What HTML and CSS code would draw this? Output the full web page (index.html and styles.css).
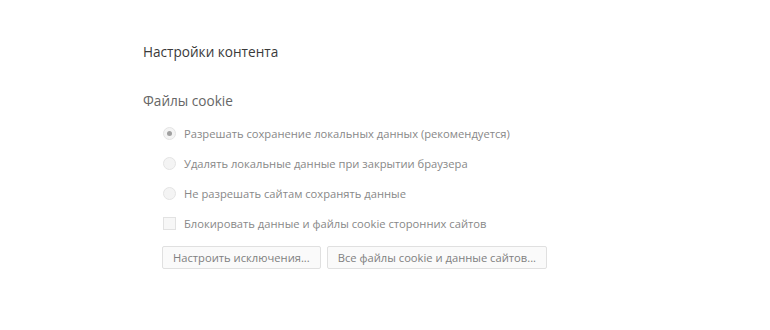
FILE: index.html
```html
<!DOCTYPE html>
<html lang="ru">
<head>
<meta charset="utf-8">
<link rel="stylesheet" href="styles.css">
</head>
<body>
<div class="page">
  <h1 class="title">Настройки контента</h1>
  <h2 class="section">Файлы cookie</h2>
  <div class="options">
    <label class="row"><span class="radio checked"></span><span class="label">Разрешать сохранение локальных данных (рекомендуется)</span></label>
    <label class="row"><span class="radio"></span><span class="label">Удалять локальные данные при закрытии браузера</span></label>
    <label class="row"><span class="radio"></span><span class="label">Не разрешать сайтам сохранять данные</span></label>
    <label class="row"><span class="check"></span><span class="label">Блокировать данные и файлы cookie сторонних сайтов</span></label>
    <div class="buttons">
      <button class="btn">Настроить исключения...</button>
      <button class="btn">Все файлы cookie и данные сайтов...</button>
    </div>
  </div>
</div>
</body>
</html>
```
FILE: styles.css
```css
html, body { margin: 0; padding: 0; background: #fff; }
body { font-family: "Open Sans", "DejaVu Sans", sans-serif; color: #333; }
.page { padding: 40px 0 0 143px; }
.title { margin: 0; font-size: 13.6px; font-weight: 400; color: #3a3a3a; line-height: 24px; }
.section { margin: 25px 0 0 0; font-size: 13.6px; font-weight: 400; color: #666; line-height: 24px; }
.options { padding: 5px 0 0 20px; display: flex; flex-direction: column; }
.row { display: flex; align-items: center; height: 30px; gap: 8px; }
.radio { width: 13px; height: 13px; border-radius: 50%; border: 1px solid #e4e4e4; background: #f4f4f4; box-sizing: border-box; display: flex; align-items: center; justify-content: center; }
.radio.checked::after { content: ""; width: 5px; height: 5px; border-radius: 50%; background: #a0a0a0; }
.check { width: 13px; height: 13px; border: 1px solid #e2e2e2; background: #f7f7f7; box-sizing: border-box; }
.label { font-size: 11.2px; color: #888; }
.buttons { display: flex; gap: 6px; margin-top: 8px; margin-left: -1px; }
.btn { font-family: inherit; font-size: 11.2px; color: #808080; background: #fafafa; border: 1px solid #e0e0e0; border-radius: 2px; height: 23px; padding: 0 10px; }
```
